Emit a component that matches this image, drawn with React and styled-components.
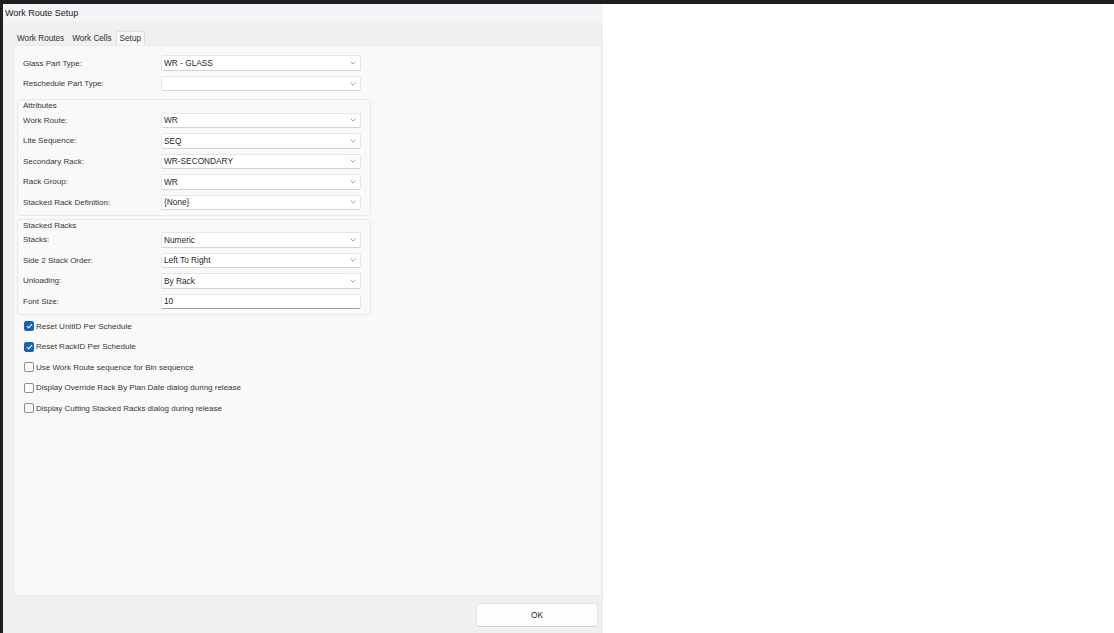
import React from 'react';
import styled, { createGlobalStyle } from 'styled-components';

const GlobalStyle = createGlobalStyle`
  html, body {
    margin: 0;
    padding: 0;
    background: #ffffff;
  }
  body {
    font-family: "Liberation Sans", Arial, sans-serif;
    color: #222;
  }
`;

const Page = styled.div`
  height: 633px;
  box-sizing: border-box;
  border-top: 4px solid #1e1e1e;
  display: flex;
  background: #fff;
`;

const Window = styled.div`
  width: 603px;
  height: 629px;
  box-sizing: border-box;
  border-left: 3px solid #1f1f1f;
  display: flex;
  flex-direction: column;
  background: #f0f0f0;
`;

const TitleBar = styled.div`
  height: 18px;
  line-height: 18px;
  padding-left: 2px;
  font-size: 9px;
  color: #1a1a1a;
  background: #f2f4f8;
`;

const TabStrip = styled.div`
  height: 23px;
  padding-left: 10px;
  display: flex;
  align-items: flex-end;
  background: #f0f0f0;
`;

const Tab = styled.div`
  height: 14px;
  line-height: 13px;
  padding: 0 3px;
  box-sizing: border-box;
  font-size: 8.2px;
  color: #2e2e2e;
  background: ${p => (p.$active ? '#f9f9f9' : 'transparent')};
  border: 1px solid ${p => (p.$active ? '#dedede' : 'transparent')};
  border-bottom: none;
  border-radius: 2px 2px 0 0;
`;

const Body = styled.div`
  flex: 1;
  display: flex;
  flex-direction: column;
  padding: 0 1px 0 11px;
`;

const Panel = styled.div`
  flex: 1;
  box-sizing: border-box;
  background: #f9f9f9;
  border: 1px solid #ececec;
  padding: 6.75px 0 0 2px;
`;

const Row = styled.div`
  display: grid;
  grid-template-columns: 138px 200px;
  align-items: center;
  height: 20.5px;
  padding-left: ${p => (p.$indent ? '6px' : '0')};
`;

const Label = styled.span`
  font-size: 8px;
  color: #363636;
  white-space: nowrap;
`;

const Select = styled.div`
  height: 15.5px;
  box-sizing: border-box;
  display: flex;
  align-items: center;
  justify-content: space-between;
  padding: 0 4px 0 2px;
  background: #fff;
  border: 1px solid #e6e6e6;
  border-bottom-color: ${p => (p.$text ? '#a0a0a0' : '#d4d4d4')};
  border-radius: 2px;
  font-size: 8.3px;
  color: #1f1f1f;
  white-space: nowrap;
`;

const GroupBox = styled.div`
  width: 354px;
  box-sizing: border-box;
  margin-top: ${p => p.$gap}px;
  border: 1px solid #e8e8e8;
  border-radius: 3px;
  padding: 0 5px 2px 5px;
`;

const Caption = styled.div`
  height: 10px;
  line-height: 11px;
  font-size: 8px;
  color: #363636;
`;

const CheckList = styled.div`
  margin-top: 1.25px;
  padding-left: 7px;
`;

const CheckRow = styled.div`
  display: flex;
  align-items: center;
  gap: 2px;
  height: 20.5px;
  font-size: 8px;
  color: #363636;
`;

const Box = styled.span`
  width: 10px;
  height: 10px;
  box-sizing: border-box;
  border-radius: 2px;
  display: flex;
  align-items: center;
  justify-content: center;
  background: ${p => (p.$checked ? '#1a64b8' : '#fbfbfb')};
  border: 1px solid ${p => (p.$checked ? '#1a64b8' : '#8c8c8c')};
`;

const Footer = styled.div`
  height: 37px;
  display: flex;
  justify-content: flex-end;
  align-items: flex-start;
  padding: 7px 5px 0 0;
  box-sizing: border-box;
`;

const OkButton = styled.button`
  width: 122px;
  height: 24px;
  background: #fdfdfd;
  border: 1px solid #e4e4e4;
  border-bottom-color: #cfcfcf;
  border-radius: 4px;
  font-family: "Liberation Sans", Arial, sans-serif;
  font-size: 8.3px;
  color: #1f1f1f;
  padding: 0;
`;

const Chevron = () => (
  <svg width="6" height="4" viewBox="0 0 6 4">
    <polyline points="0.5,0.6 3,3.1 5.5,0.6" fill="none" stroke="#969696" strokeWidth="0.9" />
  </svg>
);

const Check = () => (
  <svg width="7" height="6" viewBox="0 0 7 6">
    <polyline points="1,3.2 2.7,4.8 6,1.2" fill="none" stroke="#fff" strokeWidth="1.1" />
  </svg>
);

const Field = ({ label, value, text, indent }) => (
  <Row $indent={indent}>
    <Label>{label}</Label>
    <Select $text={text}>
      <span>{value}</span>
      {!text && <Chevron />}
    </Select>
  </Row>
);

const attributes = [
  ['Work Route:', 'WR'],
  ['Lite Sequence:', 'SEQ'],
  ['Secondary Rack:', 'WR-SECONDARY'],
  ['Rack Group:', 'WR'],
  ['Stacked Rack Definition:', '{None}'],
];

const options = [
  ['Reset UnitID Per Schedule', true],
  ['Reset RackID Per Schedule', true],
  ['Use Work Route sequence for Bin sequence', false],
  ['Display Override Rack By Plan Date dialog during release', false],
  ['Display Cutting Stacked Racks dialog during release', false],
];

export default function App() {
  return (
    <>
      <GlobalStyle />
      <Page>
        <Window>
          <TitleBar>Work Route Setup</TitleBar>
          <TabStrip>
            <Tab>Work Routes</Tab>
            <Tab>Work Cells</Tab>
            <Tab $active>Setup</Tab>
          </TabStrip>
          <Body>
            <Panel>
              <Field indent label="Glass Part Type:" value="WR - GLASS" />
              <Field indent label="Reschedule Part Type:" value="" />

              <GroupBox $gap={5.25}>
                <Caption>Attributes</Caption>
                {attributes.map(([l, v]) => (
                  <Field key={l} label={l} value={v} />
                ))}
              </GroupBox>

              <GroupBox $gap={3}>
                <Caption>Stacked Racks</Caption>
                <Field label="Stacks:" value="Numeric" />
                <Field label="Side 2 Stack Order:" value="Left To Right" />
                <Field label="Unloading:" value="By Rack" />
                <Field label="Font Size:" value="10" text />
              </GroupBox>

              <CheckList>
                {options.map(([l, on]) => (
                  <CheckRow key={l}>
                    <Box $checked={on}>{on && <Check />}</Box>
                    <span>{l}</span>
                  </CheckRow>
                ))}
              </CheckList>
            </Panel>
          </Body>
          <Footer>
            <OkButton>OK</OkButton>
          </Footer>
        </Window>
      </Page>
    </>
  );
}
